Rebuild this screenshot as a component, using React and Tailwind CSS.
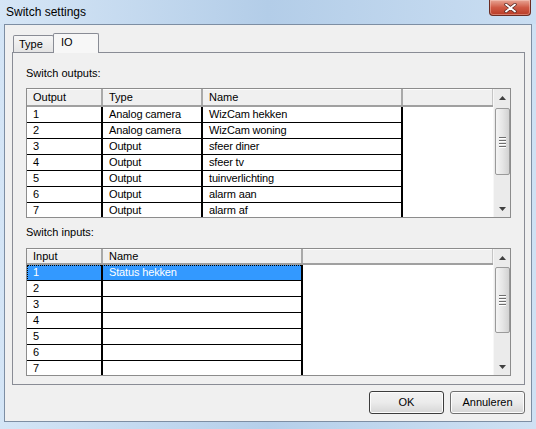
import React from 'react';

const outputs = [
  ['1', 'Analog camera', 'WizCam hekken'],
  ['2', 'Analog camera', 'WizCam woning'],
  ['3', 'Output', 'sfeer diner'],
  ['4', 'Output', 'sfeer tv'],
  ['5', 'Output', 'tuinverlichting'],
  ['6', 'Output', 'alarm aan'],
  ['7', 'Output', 'alarm af'],
];

const inputs = [
  ['1', 'Status hekken'],
  ['2', ''],
  ['3', ''],
  ['4', ''],
  ['5', ''],
  ['6', ''],
  ['7', ''],
];

const Arrow = ({ down }) => (
  <svg width="7" height="4" viewBox="0 0 7 4">
    {down ? <path d="M0 0H7L3.5 4Z" fill="#3f3f3f" /> : <path d="M3.5 0L7 4H0Z" fill="#3f3f3f" />}
  </svg>
);

const Thumb = ({ className }) => (
  <div
    className={`${className} ml-px flex w-[15px] flex-col items-center justify-center gap-px rounded-[2px] border border-[#9a9a9a] bg-linear-to-r from-[#f4f4f4] via-[#e6e6e6] to-[#d2d2d2]`}
  >
    <div className="h-px w-[7px] bg-[#6e6e6e] shadow-[0_1px_#fff]" />
    <div className="mt-px h-px w-[7px] bg-[#6e6e6e] shadow-[0_1px_#fff]" />
    <div className="mt-px h-px w-[7px] bg-[#6e6e6e] shadow-[0_1px_#fff]" />
    <div className="mt-px h-px w-[7px] bg-[#6e6e6e] shadow-[0_1px_#fff]" />
  </div>
);

const ScrollBar = ({ thumb }) => (
  <div className="flex w-[17px] shrink-0 flex-col border-l border-[#f7f7f7] bg-[#ebebeb]">
    <div className="flex h-[17px] shrink-0 items-center justify-center">
      <Arrow />
    </div>
    {thumb}
    <div className="flex-1" />
    <div className="flex h-[17px] shrink-0 items-center justify-center">
      <Arrow down />
    </div>
  </div>
);

const HeaderCell = ({ w, children }) => (
  <div className={`${w} shrink-0 border-r-2 border-[#a9a9a9] pl-[6px]`}>{children}</div>
);

const Cell = ({ w, children, sel }) => (
  <div
    className={`${w} shrink-0 truncate border-r-2 border-b border-black pl-[6px] leading-[15px] tracking-[-0.15px] ${
      sel ? 'bg-[#3399ff] text-white' : ''
    }`}
  >
    {children}
  </div>
);

const OutputsTable = () => (
  <div className="flex h-[130px] overflow-hidden border border-[#8c8c8c] bg-white">
    <div className="flex flex-1 flex-col overflow-hidden">
      <div className="flex h-[18px] shrink-0 border-b-2 border-[#a0a0a0] bg-[#f0f0f0] leading-[16px] shadow-[inset_0_1px_#fdfdfd]">
        <HeaderCell w="w-[76px]">Output</HeaderCell>
        <HeaderCell w="w-[100px]">Type</HeaderCell>
        <HeaderCell w="w-[200px]">Name</HeaderCell>
        <div className="flex-1 border-r border-[#c4c4c4]" />
      </div>
      {outputs.map(([n, type, name]) => (
        <div key={n} className="flex h-[16px] shrink-0">
          <Cell w="w-[76px]">{n}</Cell>
          <Cell w="w-[100px]">{type}</Cell>
          <Cell w="w-[200px]">{name}</Cell>
        </div>
      ))}
    </div>
    <ScrollBar thumb={<Thumb className="mt-[2px] h-[67px]" />} />
  </div>
);

const InputsTable = () => (
  <div className="flex h-[128px] overflow-hidden border border-[#8c8c8c] bg-white">
    <div className="flex flex-1 flex-col overflow-hidden">
      <div className="flex h-[16px] shrink-0 border-b-2 border-[#a0a0a0] bg-[#f0f0f0] leading-[14px] shadow-[inset_0_1px_#fdfdfd]">
        <HeaderCell w="w-[76px]">Input</HeaderCell>
        <HeaderCell w="w-[200px]">Name</HeaderCell>
        <div className="flex-1 border-r border-[#c4c4c4]" />
      </div>
      {inputs.map(([n, name], i) => (
        <div key={n} className="relative flex h-[16px] shrink-0">
          <Cell w="w-[76px]" sel={i === 0}>{n}</Cell>
          <Cell w="w-[200px]" sel={i === 0}>{name}</Cell>
          {i === 0 && (
            <div className="pointer-events-none absolute top-0 left-0 h-[16px] w-[276px] border border-dotted border-black" />
          )}
        </div>
      ))}
    </div>
    <ScrollBar thumb={<Thumb className="mt-[1px] h-[66px]" />} />
  </div>
);

const Button = ({ children, def }) => (
  <button
    className={`h-[23px] w-[75px] rounded-[3px] border ${
      def ? 'border-[#3c3c3c]' : 'border-[#707070]'
    } bg-linear-to-b from-[#f2f2f2] via-[#ebebeb] to-[#d6d6d6] text-[11px] text-black shadow-[inset_0_0_0_1px_#fcfcfc]`}
  >
    {children}
  </button>
);

export default function App() {
  return (
    <div className="flex h-[429px] w-[536px] flex-col bg-linear-to-r from-[#d4e5f6] via-[#b5cfea] to-[#cfe1f3] font-['Liberation_Sans',Arial,sans-serif] text-[11px] text-black">
      <div className="flex h-[24px] shrink-0 items-start justify-between bg-linear-to-r from-[#d6e6f6] via-[#b3cde8] to-[#cadef2]">
        <div className="self-center pl-[6px] text-[12px] leading-[14px]">Switch settings</div>
        <div className="mr-[5px] flex h-[16px] w-[42px] items-center justify-center rounded-b-[4px] border border-t-0 border-[#6b2c22] bg-linear-to-b from-[#e7a595] via-[#cf5a45] to-[#b93a25] shadow-[inset_0_0_0_1px_rgba(255,220,210,0.4)]">
          <svg width="13" height="10" viewBox="0 0 13 10">
            <path d="M2 1.5L11 8.5M11 1.5L2 8.5" stroke="#5a2a24" strokeWidth="3.4" strokeLinecap="round" />
            <path d="M2 1.5L11 8.5M11 1.5L2 8.5" stroke="#ffffff" strokeWidth="1.8" strokeLinecap="round" />
          </svg>
        </div>
      </div>
      <div className="mx-[4px] flex h-[398px] flex-col border border-[#7d8ea3] bg-[#f0f0f0]">
        <div className="mt-[8px] ml-[7px] flex w-[513px] flex-col">
          <div className="flex h-[19px] items-end pl-px">
            <div className="h-[17px] w-[41px] rounded-t-[2px] border border-b-0 border-[#898c95] bg-linear-to-b from-[#f6f6f6] to-[#e4e4e4] pl-[5px] leading-[16px]">
              Type
            </div>
            <div className="relative z-10 -mb-px -ml-px h-[20px] w-[46px] rounded-t-[2px] border border-b-0 border-[#898c95] bg-[#f7f7f7] pl-[7px] leading-[16px]">
              IO
            </div>
          </div>
          <div className="flex h-[333px] flex-col border border-[#898c95] bg-[#f0f0f0] px-[13px] pt-[14px]">
            <div className="leading-[13px]">Switch outputs:</div>
            <div className="mt-[8px]">
              <OutputsTable />
            </div>
            <div className="mt-[8px] leading-[13px]">Switch inputs:</div>
            <div className="mt-[9px]">
              <InputsTable />
            </div>
          </div>
        </div>
        <div className="mt-[6px] flex justify-end gap-[6px] pr-[6px]">
          <Button def>OK</Button>
          <Button>Annuleren</Button>
        </div>
      </div>
    </div>
  );
}
